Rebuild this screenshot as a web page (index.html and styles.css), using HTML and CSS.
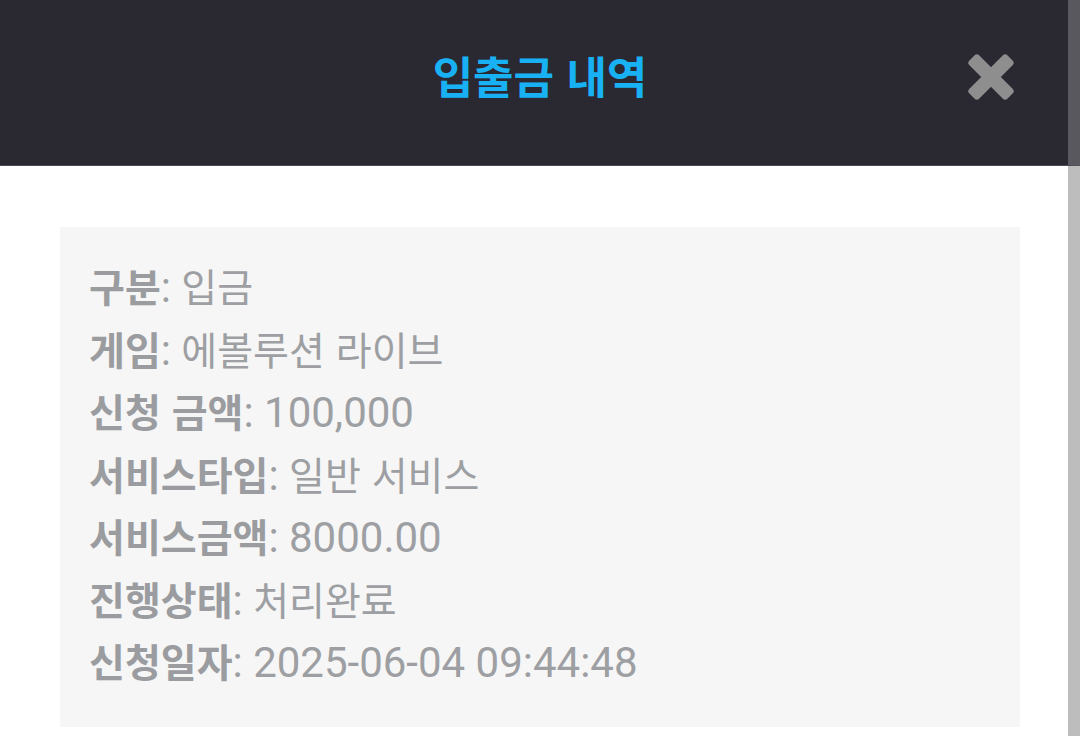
FILE: index.html
```html
<!DOCTYPE html>
<html lang="ko">
<head>
<meta charset="utf-8">
<title>입출금 내역</title>
<link rel="stylesheet" href="styles.css">
</head>
<body>
<header class="header">
  <div class="spacer"></div>
  <h1 class="title">입출금 내역</h1>
  <button class="close" aria-label="닫기">
    <svg width="48" height="48" viewBox="0 0 48 48">
      <rect x="-3" y="17" width="54" height="14" rx="3.5" transform="rotate(45 24 24)" fill="#8e8e8e"/>
      <rect x="-3" y="17" width="54" height="14" rx="3.5" transform="rotate(-45 24 24)" fill="#8e8e8e"/>
    </svg>
  </button>
</header>
<main class="content">
  <section class="card">
    <div class="row"><span class="label">구분</span><span class="sep">: </span><span class="ko">입금</span></div>
    <div class="row"><span class="label">게임</span><span class="sep">: </span><span class="ko">에볼루션 라이브</span></div>
    <div class="row"><span class="label">신청 금액</span><span class="sep">: </span><span class="num">100,000</span></div>
    <div class="row"><span class="label">서비스타입</span><span class="sep">: </span><span class="ko">일반 서비스</span></div>
    <div class="row"><span class="label">서비스금액</span><span class="sep">: </span><span class="num">8000.00</span></div>
    <div class="row"><span class="label">진행상태</span><span class="sep">: </span><span class="ko">처리완료</span></div>
    <div class="row"><span class="label">신청일자</span><span class="sep">: </span><span class="num">2025-06-04 09:44:48</span></div>
  </section>
</main>
</body>
</html>
```
FILE: styles.css
```css
html, body {
  margin: 0;
  padding: 0;
  background: #ffffff;
}
body {
  width: 1080px;
  height: 736px;
  overflow: hidden;
  font-family: Roboto, "Noto Sans CJK KR", sans-serif;
}
.header {
  height: 166px;
  box-sizing: border-box;
  background: #2a2932;
  border-right: 12px solid #59585e;
  border-bottom: 1px solid #4a4a50;
  display: grid;
  grid-template-columns: 1fr auto 1fr;
  align-items: center;
  padding: 0 53px 16px 65px;
}
.title {
  margin: 0;
  font-family: "Noto Sans CJK KR", sans-serif;
  font-size: 44px;
  font-weight: 700;
  line-height: 1;
  color: #18b1f3;
}
.close {
  justify-self: end;
  width: 48px;
  height: 48px;
  padding: 0;
  margin-top: 4px;
  border: 0;
  background: none;
  display: flex;
}
.content {
  height: 570px;
  box-sizing: border-box;
  border-right: 12px solid #bdbdbd;
  padding: 61px 48px 0 60px;
}
.card {
  background: #f6f6f6;
  height: 500px;
  box-sizing: border-box;
  padding: 27px 30px 0 29px;
  color: #9d9fa3;
}
.row {
  height: 62.5px;
  line-height: 62.5px;
  font-size: 41px;
  white-space: nowrap;
}
.label {
  font-family: "Noto Sans CJK KR", sans-serif;
  font-size: 39px;
  font-weight: 700;
  color: #9a9ca0;
}
.sep, .num {
  font-family: Roboto, sans-serif;
  font-size: 42px;
}
.ko {
  font-family: "Noto Sans CJK KR", sans-serif;
  font-size: 39px;
  font-weight: 400;
}
```
